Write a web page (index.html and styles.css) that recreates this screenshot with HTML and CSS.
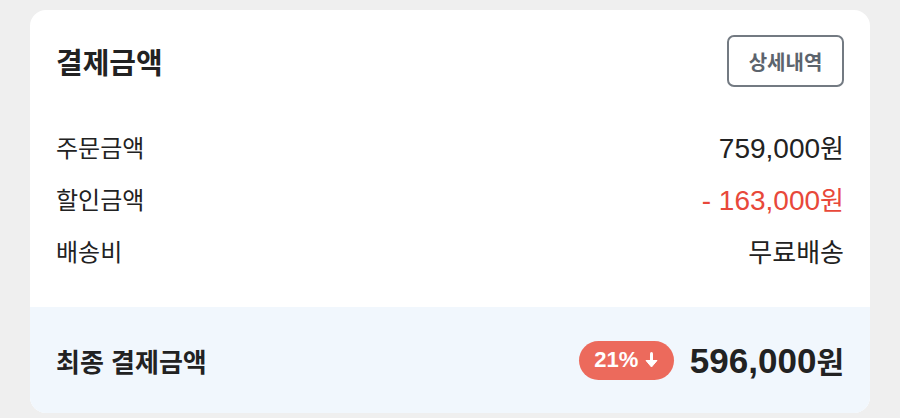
FILE: index.html
```html
<!DOCTYPE html>
<html lang="ko">
<head>
	<meta charset="utf-8">
	<title>결제금액</title>
	<link rel="stylesheet" href="styles.css">
</head>
<body>
<div class="pay-card">
	<div class="pay-head">
		<h2 class="pay-title">결제금액</h2>
		<button class="btn-detail" type="button">상세내역</button>
	</div>
	<ul class="pay-list">
		<li><span class="label">주문금액</span><span class="value"><span class="num">759,000</span>원</span></li>
		<li><span class="label">할인금액</span><span class="value minus"><span class="num">- 163,000</span>원</span></li>
		<li><span class="label">배송비</span><span class="value">무료배송</span></li>
	</ul>
	<div class="pay-total">
		<span class="total-label">최종 결제금액</span>
		<div class="total-right">
			<span class="badge">21%<svg class="arrow" width="13" height="16" viewBox="0 0 13 16"><path d="M6.5 1.5v8" stroke="#fff" stroke-width="3" stroke-linecap="round"/><path d="M1 8.5h11l-5.5 6.5z" fill="#fff" stroke="#fff" stroke-width="1" stroke-linejoin="round"/></svg></span>
			<span class="total-price">596,000<small>원</small></span>
		</div>
	</div>
</div>
</body>
</html>
```

FILE: styles.css
```css
html,body{height:100%;overflow:hidden;}
body,div,ul,li,h2{margin:0;padding:0;}
body{background:#efefef;padding:10px 30px;box-sizing:border-box;font-family:"Liberation Sans","Noto Sans CJK KR",sans-serif;color:#222;}
ul{list-style-type:none;}

.pay-card{background:#fff;border-radius:16px;overflow:hidden;height:403px;display:flex;flex-direction:column;}
.pay-head{display:flex;justify-content:space-between;align-items:center;padding:25px 26px 0;height:52px;}
.pay-title{font-size:29px;font-weight:700;}
.btn-detail{width:117px;height:52px;border:2px solid #737a82;border-radius:7px;background:#fff;font:700 20px "Noto Sans CJK KR",sans-serif;color:#5c646d;padding:0;}

.pay-list{padding:33px 26px 31px;}
.pay-list li{display:flex;justify-content:space-between;align-items:center;height:52px;font-size:24px;}
.pay-list .value{font-size:26px;}
.pay-list .num{font-size:28px;}
.pay-list .value.minus{color:#e8483a;}

.pay-total{flex:1;background:#f1f7fd;display:flex;justify-content:space-between;align-items:center;padding:0 26px;}
.total-label{font-size:26px;font-weight:700;}
.total-right{display:flex;align-items:center;gap:16px;}
.badge{display:flex;align-items:center;justify-content:center;gap:7px;width:95px;height:39px;border-radius:20px;background:#ec6a5c;color:#fff;font-size:22px;font-weight:700;}
.total-price{font-size:35px;font-weight:700;}
.total-price small{font-size:30px;}
```
